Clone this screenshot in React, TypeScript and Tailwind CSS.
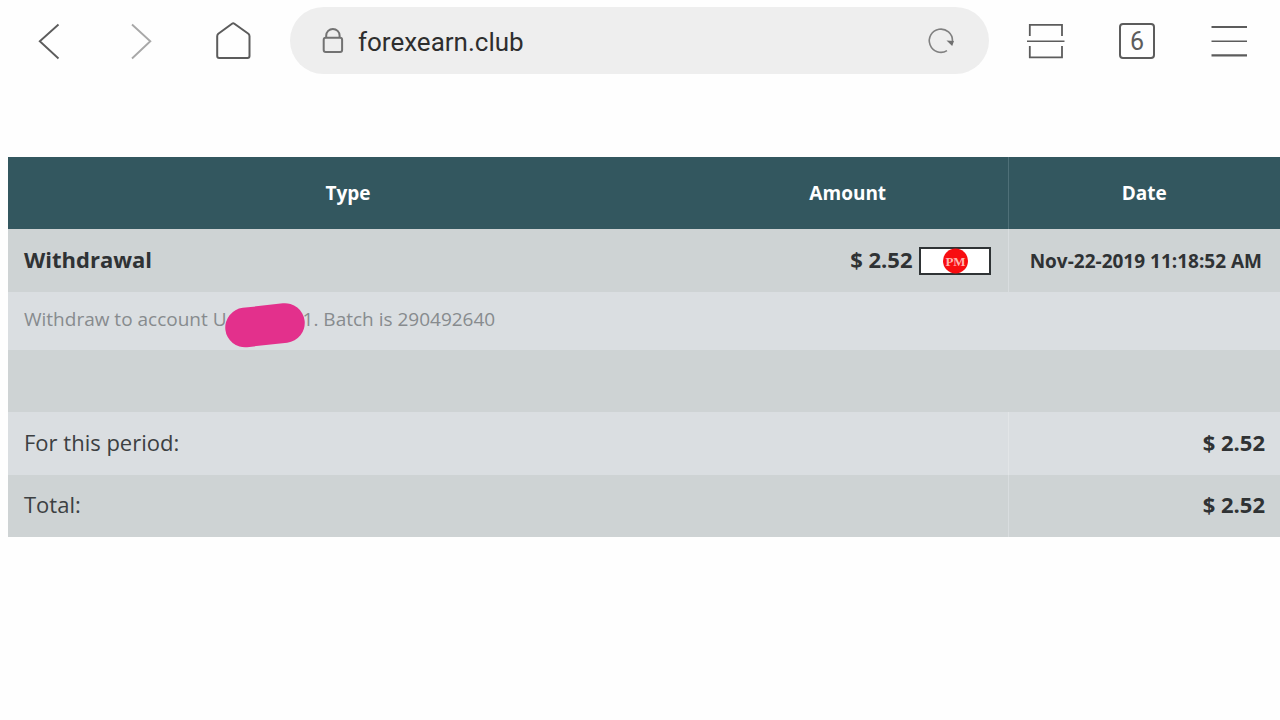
import { useState } from "react";

const iconButton = "flex h-10 w-10 items-center justify-center cursor-pointer";

function PerfectMoneyLogo() {
  return (
    <svg
      width="72"
      height="28"
      viewBox="0 0 72 28"
      role="img"
      aria-label="PM"
      className="shrink-0"
    >
      <rect x="1" y="1" width="70" height="26" fill="#fff" stroke="#2f3335" strokeWidth="2" />
      <circle cx="36.5" cy="14" r="12.5" fill="#f80d10" />
      <text
        x="36.5"
        y="19"
        textAnchor="middle"
        fontSize="13"
        fontFamily="Liberation Serif, serif"
        fill="#ffb3ad"
      >
        PM
      </text>
    </svg>
  );
}

function Toolbar() {
  const [url, setUrl] = useState<string>("forexearn.club");

  return (
    <header className="flex items-center pt-[7px] pl-[29px] pr-[31px] text-[#5c5c5c]">
      <nav className="flex gap-[52px]">
        <button aria-label="Back" className={iconButton}>
          <svg width="40" height="40" viewBox="0 0 40 40" fill="none" stroke="currentColor" strokeWidth="1.9">
            <path d="M29.5 3.5 10.8 20.3 29.5 37.5" />
          </svg>
        </button>
        <button aria-label="Forward" className={iconButton}>
          <svg width="40" height="40" viewBox="0 0 40 40" fill="none" stroke="#a8a8a8" strokeWidth="1.9">
            <path d="M11 3.500 29.3 20.3 11 37.5" />
          </svg>
        </button>
        <button aria-label="Home" className={iconButton}>
          <svg width="40" height="40" viewBox="0 0 40 40" fill="none" stroke="currentColor" strokeWidth="2" strokeLinejoin="round">
            <path d="M19 2.7Q20.2 1.8 21.4 2.7L35.4 12.8Q36.5 13.8 36.5 15.2V35Q36.5 37 34.5 37H6.2Q4.2 37 4.2 35V15.2Q4.2 13.8 5.3 12.8Z" />
          </svg>
        </button>
      </nav>

      <label className="mr-9 ml-[37px] flex h-[67px] min-w-0 flex-1 items-center rounded-full bg-[#eeeeee] pr-7 pl-8">
        <svg width="22" height="28" viewBox="0 0 22 28" fill="none" stroke="#727272" strokeWidth="2" className="shrink-0">
          <rect x="1.7" y="10.8" width="18.4" height="14.2" rx="2" />
          <path d="M4.2 10.5V8.6a6.7 6.7 0 0 1 13.4 0v1.9" />
        </svg>
        <input
          aria-label="Address"
          value={url}
          onChange={(e) => setUrl(e.target.value)}
          className="ml-[14px] h-10 min-w-0 flex-1 bg-transparent pt-[2px] font-['Roboto',sans-serif] text-[26px] text-[#2e2e2e] outline-none"
        />
        <button aria-label="Reload" className={iconButton}>
          <svg width="40" height="40" viewBox="0 0 40 40" fill="none" stroke="#808080" strokeWidth="1.6">
            <path d="M26 29.6A11.6 11.6 0 1 1 31.5 20" />
            <path d="M25.5 19.5 33 20 31.2 25Z" fill="#707070" stroke="none" />
          </svg>
        </button>
      </label>

      <div className="flex gap-[52px]">
        <button aria-label="Scan" className={iconButton}>
          <svg width="40" height="40" viewBox="0 0 40 40" fill="none" stroke="currentColor">
            <path d="M4.8 15V3.8H37V15M4.8 25V36.3H37V25" strokeWidth="1.8" />
            <path d="M2 20.2H39.5" strokeWidth="1.6" />
          </svg>
        </button>
        <button aria-label="Tabs" className={iconButton}>
          <span className="flex h-9 w-9 items-center justify-center rounded-sm border-2 border-[#5c5c5c] pt-[2px] font-['Roboto',sans-serif] text-[25px]">
            6
          </span>
        </button>
        <button aria-label="Menu" className={iconButton}>
          <svg width="40" height="40" viewBox="0 0 40 40" fill="none" stroke="currentColor">
            <path d="M2.5 6H38M2.5 34.3H38" strokeWidth="2.2" />
            <path d="M2.5 20.3H38" strokeWidth="1.6" />
          </svg>
        </button>
      </div>
    </header>
  );
}

export default function App() {
  return (
    <div className="min-h-screen bg-[#fefefe] font-['Open_Sans',sans-serif]">
      <Toolbar />
      <main className="mt-[83px] pl-2">
        <table className="w-full table-fixed border-collapse text-[22px] leading-8 text-[#3c4042]">
          <colgroup>
            <col />
            <col className="w-[320px]" />
            <col className="w-[272px]" />
          </colgroup>
          <thead>
            <tr className="h-[72px] bg-[#33575f] text-[19px] text-white">
              <th className="font-bold">Type</th>
              <th className="font-bold">Amount</th>
              <th className="border-l border-[#4f7078] font-bold">Date</th>
            </tr>
          </thead>
          <tbody>
            <tr className="h-[63px] bg-[#ced3d4] font-bold text-[#2f3234]">
              <td className="px-4 pb-1">Withdrawal</td>
              <td className="pr-[17px]">
                <div className="flex items-center justify-end gap-[6px]">
                  <span className="pb-1">$ 2.52</span>
                  <PerfectMoneyLogo />
                </div>
              </td>
              <td className="border-l border-[#d9dddf] pr-[18px] text-right text-[19px]">
                Nov-22-2019 11:18:52 AM
              </td>
            </tr>
            <tr className="h-[58px] bg-[#dadee1] text-[19px] text-[#878b8e]">
              <td colSpan={3} className="px-4 pb-1">
                Withdraw to account U
                <span className="relative inline-block w-[76px]">
                  <svg
                    width="84"
                    height="46"
                    viewBox="0 0 84 46"
                    className="absolute -top-6 -left-1"
                    aria-hidden="true"
                  >
                    <path
                      d="M22 25.500 62 21"
                      stroke="#e3308c"
                      strokeWidth="39.5"
                      strokeLinecap="round"
                    />
                  </svg>
                </span>
                1. Batch is 290492640
              </td>
            </tr>
            <tr className="h-[62px] bg-[#ced3d4]">
              <td colSpan={3} />
            </tr>
            <tr className="h-[63px] bg-[#dadee1]">
              <td colSpan={2} className="px-4 pb-1">
                For this period:
              </td>
              <td className="border-l border-[#e2e5e7] pr-[15px] pb-1 text-right font-bold text-[#2f3234]">
                $ 2.52
              </td>
            </tr>
            <tr className="h-[62px] bg-[#ced3d4]">
              <td colSpan={2} className="px-4 pb-1">
                Total:
              </td>
              <td className="border-l border-[#d9dddf] pr-[15px] pb-1 text-right font-bold text-[#2f3234]">
                $ 2.52
              </td>
            </tr>
          </tbody>
        </table>
      </main>
    </div>
  );
}
